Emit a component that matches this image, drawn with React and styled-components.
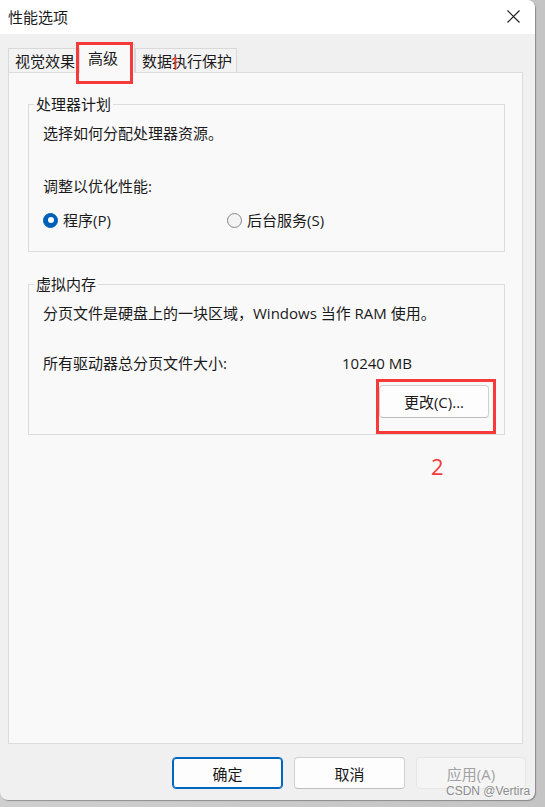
import styled, { createGlobalStyle } from "styled-components";

const GlobalStyle = createGlobalStyle`
  html, body {
    margin: 0;
    padding: 0;
    background: #c9c9c9;
  }
  * {
    box-sizing: border-box;
  }
`;

const FONT = `"Open Sans", "Noto Sans CJK SC", sans-serif`;

const Page = styled.div`
  width: 545px;
  height: 807px;
  overflow: hidden;
  background: linear-gradient(90deg, #cfcfcf, #c4c4c4);
  font-family: ${FONT};
  color: #1a1a1a;
`;

const Window = styled.div`
  position: relative;
  width: 535px;
  height: 800px;
  display: flex;
  flex-direction: column;
  background: #f0f0f0;
  border-radius: 0 8px 8px 8px;
  overflow: hidden;
  box-shadow: 1px 1px 1px rgba(0, 0, 0, 0.3);
`;

const TitleBar = styled.div`
  height: 34px;
  flex-shrink: 0;
  display: flex;
  align-items: center;
  justify-content: space-between;
  padding: 0 15px 0 8px;
  background: #ffffff;
`;

const Title = styled.span`
  font-size: 15px;
  line-height: 20px;
`;

const CloseIcon = styled.svg`
  width: 13px;
  height: 13px;
  margin-top: -2px;
`;

const Body = styled.div`
  flex: 1;
  display: flex;
  flex-direction: column;
  padding: 10px 12px 0 8px;
  min-height: 0;
`;

const TabStrip = styled.div`
  height: 28px;
  display: flex;
  align-items: flex-end;
  position: relative;
  z-index: 1;
`;

const Tab = styled.div`
  height: ${(p) => (p.$active ? "29px" : "24px")};
  margin-bottom: ${(p) => (p.$active ? "-1px" : "0")};
  padding: ${(p) => (p.$active ? "0 16px 2px 8px" : "0 4px 0 6px")};
  display: flex;
  align-items: center;
  font-size: 15px;
  line-height: 20px;
  white-space: nowrap;
  background: ${(p) => (p.$active ? "#f9f9f9" : "#f3f3f3")};
  border: 1px solid #d9d9d9;
  border-bottom: none;
  border-left-width: ${(p) => (p.$active ? "0" : "1px")};
`;

const Panel = styled.div`
  flex: 1;
  background: #f9f9f9;
  border: 1px solid #dcdcdc;
  padding: 21px 17px 0 19px;
`;

const Group = styled.fieldset`
  margin: 0 0 22px 0;
  padding: 0;
  border: 1px solid #dcdcdc;
  min-width: 0;
`;

const Legend = styled.legend`
  margin-left: 5px;
  padding: 0 2px;
  font-size: 15px;
  line-height: 20px;
`;

const GroupContent = styled.div`
  padding: 9px 15px ${(p) => p.$bottom}px 14px;
`;

const Text = styled.div`
  font-size: 15px;
  line-height: 20px;
  margin-top: ${(p) => p.$gap || 0}px;
  white-space: nowrap;
`;

const RadioRow = styled.div`
  display: grid;
  grid-template-columns: 184px auto;
  margin-top: 14px;
`;

const RadioOption = styled.label`
  display: flex;
  align-items: center;
  gap: 5px;
  font-size: 15px;
  line-height: 20px;
`;

const RadioDot = styled.span`
  width: 15px;
  height: 15px;
  border-radius: 50%;
  flex-shrink: 0;
  display: flex;
  align-items: center;
  justify-content: center;
  background: ${(p) => (p.$checked ? "#005fb8" : "#f3f3f3")};
  border: 1px solid ${(p) => (p.$checked ? "#005fb8" : "#858585")};

  &::after {
    content: "";
    display: ${(p) => (p.$checked ? "block" : "none")};
    width: 6px;
    height: 6px;
    border-radius: 50%;
    background: #ffffff;
  }
`;

const SizeRow = styled.div`
  display: grid;
  grid-template-columns: 299px auto;
  margin-top: 30px;
  font-size: 15px;
  line-height: 20px;
  white-space: nowrap;
`;

const ButtonRow = styled.div`
  display: flex;
  justify-content: flex-end;
  margin-top: 12px;
`;

const Button = styled.button`
  width: ${(p) => p.$width}px;
  height: ${(p) => p.$height}px;
  padding: 0;
  font-family: ${FONT};
  font-size: 15px;
  color: ${(p) => (p.disabled ? "#a3a3a3" : "#1a1a1a")};
  background: ${(p) => (p.disabled ? "#f5f5f5" : "#fdfdfd")};
  border: 1px solid
    ${(p) => (p.$primary ? "#0067c0" : p.disabled ? "#e6e6e6" : "#d0d0d0")};
  border-bottom-color: ${(p) =>
    p.$primary ? "#0067c0" : p.disabled ? "#e6e6e6" : "#bdbdbd"};
  box-shadow: ${(p) => (p.$primary ? "inset 0 0 0 1px #0067c0" : "none")};
  border-radius: 4px;
`;

const Footer = styled.div`
  height: 56px;
  flex-shrink: 0;
  display: flex;
  justify-content: flex-end;
  gap: 11px;
  padding: 13px 9px 11px 0;
`;

const RedBox = styled.div`
  position: absolute;
  border: 3px solid #f63a3a;
  pointer-events: none;
  z-index: 5;
`;

const RedMark = styled.span`
  position: absolute;
  color: #f63a3a;
  font-family: "Open Sans", sans-serif;
  line-height: 1;
  z-index: 5;
`;

const Watermark = styled.span`
  position: absolute;
  left: 446px;
  top: 784px;
  font-family: "Liberation Sans", Arial, sans-serif;
  font-size: 12px;
  line-height: 14px;
  white-space: nowrap;
  color: #8c8c8c;
  text-shadow: 0 0 2px #ffffff;
  z-index: 6;
`;

export default function App() {
  return (
    <Page>
      <GlobalStyle />
      <Window>
        <TitleBar>
          <Title>性能选项</Title>
          <CloseIcon viewBox="0 0 13 13">
            <path d="M0.5 0.5 L12.5 12.5 M12.5 0.5 L0.5 12.5" stroke="#1a1a1a" strokeWidth="1.1" fill="none" />
          </CloseIcon>
        </TitleBar>

        <Body>
          <TabStrip>
            <Tab>视觉效果</Tab>
            <Tab $active>高级</Tab>
            <Tab>数据执行保护</Tab>
          </TabStrip>

          <Panel>
            <Group>
              <Legend>处理器计划</Legend>
              <GroupContent $bottom={21}>
                <Text>选择如何分配处理器资源。</Text>
                <Text $gap={33}>调整以优化性能:</Text>
                <RadioRow>
                  <RadioOption>
                    <RadioDot $checked />
                    程序(P)
                  </RadioOption>
                  <RadioOption>
                    <RadioDot />
                    后台服务(S)
                  </RadioOption>
                </RadioRow>
              </GroupContent>
            </Group>

            <Group>
              <Legend>虚拟内存</Legend>
              <GroupContent $bottom={16}>
                <Text>分页文件是硬盘上的一块区域，Windows 当作 RAM 使用。</Text>
                <SizeRow>
                  <span>所有驱动器总分页文件大小:</span>
                  <span>10240 MB</span>
                </SizeRow>
                <ButtonRow>
                  <Button $width={110} $height={33}>更改(C)...</Button>
                </ButtonRow>
              </GroupContent>
            </Group>
          </Panel>
        </Body>

        <Footer>
          <Button $width={111} $height={32} $primary>确定</Button>
          <Button $width={111} $height={32}>取消</Button>
          <Button $width={110} $height={32} disabled>应用(A)</Button>
        </Footer>

        <RedBox style={{ left: 76, top: 42, width: 57, height: 42 }} />
        <RedMark style={{ left: 170, top: 54, fontSize: 18 }}>1</RedMark>
        <RedBox style={{ left: 376, top: 379, width: 120, height: 55 }} />
        <RedMark style={{ left: 431, top: 455, fontSize: 22 }}>2</RedMark>
        <Watermark>CSDN @Vertira</Watermark>
      </Window>
    </Page>
  );
}
